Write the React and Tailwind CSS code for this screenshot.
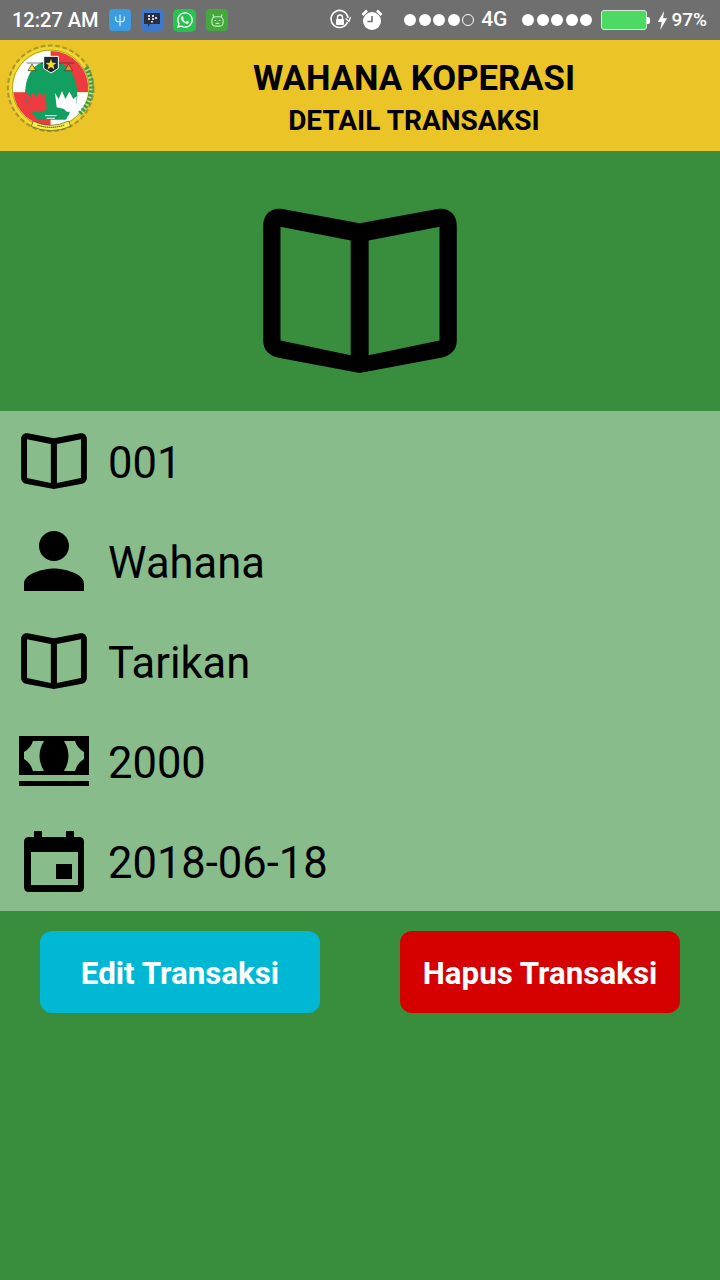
import React from "react";
import { FaWhatsapp } from "react-icons/fa";

const BookIcon = ({ className }) => (
  <svg viewBox="70 52 582 496" className={className}>
    <path
      fillRule="evenodd"
      d="M360 98L128 55C95 49 70 70 70 105V450C70 480 90 497 120 503L360 548L600 503C632 497 652 480 652 450V105C652 70 627 49 594 55Z M122 108L333 150V495L122 450Z M387 150L600 108V450L387 495Z"
    />
  </svg>
);

const PersonIcon = () => (
  <svg viewBox="4 4 16 16" className="w-[60px] h-[60px]">
    <path d="M12 12c2.21 0 4-1.79 4-4s-1.79-4-4-4-4 1.79-4 4 1.79 4 4 4zm0 2c-2.67 0-8 1.34-8 4v2h16v-2c0-2.66-5.33-4-8-4z" />
  </svg>
);

const MoneyIcon = () => (
  <svg viewBox="0 0 70 50" className="w-[70px] h-[50px]">
    <path
      fillRule="evenodd"
      d="M0 0H70V39H0Z M25 5H14Q12 12 5 16V23Q12 27 14 35H25Q16 20 25 5Z M45 5H56Q58 12 65 16V23Q58 27 56 35H45Q54 20 45 5Z"
    />
    <rect x="0" y="45" width="70" height="5" />
  </svg>
);

const CalendarIcon = () => (
  <svg viewBox="0 0 60 61" className="w-[60px] h-[61px]">
    <path
      fillRule="evenodd"
      d="M10 0H18V6H42V0H50V6H55Q60 6 60 11V56Q60 61 55 61H5Q0 61 0 56V11Q0 6 5 6H10Z M7 21V54H54V21Z"
    />
    <rect x="32" y="33" width="16" height="15" />
  </svg>
);

// coordinates follow the 3x crop of the emblem
const Logo = () => (
  <svg viewBox="18 132 270 276" className="w-[90px] h-[92px]">
    <circle cx="152" cy="268" r="128" fill="none" stroke="#a89a2a" strokeWidth="7" strokeDasharray="14 8" />
    <circle cx="152" cy="268" r="125" fill="#f0d830" />
    <circle cx="152" cy="268" r="115" fill="#f8ec40" stroke="#8a8428" strokeWidth="2" />
    <path d="M152 156A112 112 0 0 0 40 280H152Z" fill="#ffffff" />
    <path d="M152 156A112 112 0 0 1 264 280H152Z" fill="#ee3b3f" />
    <path d="M40 280A112 112 0 0 0 152 380V280Z" fill="#ee3b3f" />
    <path d="M264 280A112 112 0 0 1 152 380V280Z" fill="#ffffff" />
    <path d="M258 205A110 110 0 0 1 238 345" fill="none" stroke="#2d9c6c" strokeWidth="14" strokeDasharray="7 5" />
    <path d="M75 290C75 218 110 186 150 186C198 186 232 225 232 290L228 320L210 345L190 358H115L95 330L75 300Z" fill="#12a060" />
    <path d="M74 288L82 278L90 296L100 278L108 296L118 278L126 294L136 280L140 330L118 345L95 335Z" fill="#ee3b3f" />
    <path d="M165 282L176 300L186 276L196 300L208 278L220 300L230 292L228 325L210 348L192 330L170 325Z" fill="#ffffff" />
    <path d="M95 338H210L198 362H112Z" fill="#12a060" />
    <path d="M135 350H170M140 358H165" stroke="#e8f4ea" strokeWidth="3" />
    <path d="M80 192H222" stroke="#333333" strokeWidth="2" />
    <path d="M96 195L108 215H84Z" fill="#f7dc2a" stroke="#333333" strokeWidth="2" />
    <path d="M206 195L218 215H194Z" fill="#ec8c2c" stroke="#333333" strokeWidth="2" />
    <path d="M131 172H175V208L153 222L131 208Z" fill="#1f2a30" stroke="#ffffff" strokeWidth="3" />
    <path d="M153 180L157 191L169 192L160 199L163 211L153 204L143 211L146 199L137 192L149 191Z" fill="#f7dc2a" />
    <path d="M100 366Q152 392 206 366L212 382Q152 408 94 382Z" fill="#f9ef4c" stroke="#4b4a20" strokeWidth="2" />
    <path d="M112 378Q152 392 194 378" fill="none" stroke="#2c2c20" strokeWidth="3" strokeDasharray="4 2" />
  </svg>
);

const StatusApps = () => (
  <div className="flex items-center gap-[10px] ml-[11px]">
    <div className="w-[22px] h-[22px] rounded-[4px] bg-[#3a9be0] flex items-center justify-center">
      <svg viewBox="0 0 16 16" className="w-[14px] h-[14px]" fill="none" stroke="#d8eefa" strokeWidth="1.4">
        <path d="M8 2V15M3 4V7Q3 10 8 10Q13 10 13 7V4" />
      </svg>
    </div>
    <div className="w-[22px] h-[22px] rounded-[4px] bg-[#3b78d0] flex items-center justify-center">
      <svg viewBox="0 0 18 16" className="w-[18px] h-[16px]">
        <path d="M1 1H17V12H7L5 15V12H1Z" fill="#2b2f3a" />
        <path d="M5 3H7V5H5ZM9 3H11V5H9ZM5 6H7V8H5ZM9 6H11V8H9ZM12 5H14V7H12ZM8 9H10V10.5H8Z" fill="#d5d8e0" />
      </svg>
    </div>
    <div className="w-[23px] h-[23px] rounded-[5px] bg-[#28c24f] flex items-center justify-center">
      <FaWhatsapp className="w-[18px] h-[18px] text-white" />
    </div>
    <div className="w-[22px] h-[22px] rounded-[4px] bg-[#44a83f] flex items-center justify-center">
      <svg viewBox="0 0 16 16" className="w-[15px] h-[15px]" fill="none" stroke="#cdeec0" strokeWidth="1.2">
        <rect x="2" y="4" width="12" height="10" rx="4" />
        <path d="M4 4 L3 1.5M12 4 L13 1.5M5 8H6.5M9.5 8H11M6 11H10" />
      </svg>
    </div>
  </div>
);

const Dots = ({ empty }) => (
  <div className="flex items-center gap-[2.5px]">
    {[0, 1, 2, 3, 4].map((i) =>
      i === 4 && empty ? (
        <span key={i} className="w-[12px] h-[12px] rounded-full border border-white" />
      ) : (
        <span key={i} className="w-[12px] h-[12px] rounded-full bg-white" />
      )
    )}
  </div>
);

const StatusBar = () => (
  <div className="h-10 bg-[#6f6f6f] flex items-center pl-[12px] pr-[13px] text-white text-[20px] font-medium">
    <span>12:27 AM</span>
    <StatusApps />
    <div className="flex-1" />
    <svg viewBox="0 0 22 22" className="w-[22px] h-[22px] mr-[10px]" fill="none" stroke="white" strokeWidth="1.6">
      <path d="M18.5 13A8.5 8.5 0 1 1 19 9" />
      <path d="M16.5 9.5L20 12.5L21.5 8" strokeWidth="1.2" />
      <rect x="7" y="10" width="8" height="6" rx="1" fill="white" stroke="none" />
      <path d="M8.5 10V8.5A2.5 2.5 0 0 1 13.5 8.5V10" strokeWidth="1.4" />
    </svg>
    <svg viewBox="0 0 22 22" className="w-[22px] h-[22px] mr-[21px]">
      <circle cx="11" cy="12" r="9" fill="white" />
      <path d="M11 7V12.5H6.5" stroke="#6f6f6f" strokeWidth="1.6" fill="none" />
      <path d="M1.5 6L6 1.5M20.5 6L16 1.5" stroke="white" strokeWidth="2.6" />
    </svg>
    <Dots empty />
    <span className="ml-[7px] mr-[15px] text-[21px]">4G</span>
    <Dots />
    <div className="ml-[9px] w-[46px] h-[20px] rounded-[3px] border border-[#d9ead9] bg-[#4cd964]" />
    <div className="w-[3px] h-[7px] bg-white rounded-r-[2px] mr-[7px]" />
    <svg viewBox="0 0 10 18" className="w-[11px] h-[19px] mr-[3px]" fill="white">
      <path d="M6.5 0L0.5 10.5H4.2L2.8 18L9.5 6.8H5.6Z" />
    </svg>
    <span className="text-[19px]">97%</span>
  </div>
);

const Row = ({ icon, value }) => (
  <div className="h-[100px] flex items-center">
    <div className="w-[108px] flex justify-center shrink-0">{icon}</div>
    <span className="block pt-[6px] text-[43.5px] leading-none text-black">{value}</span>
  </div>
);

export default function App() {
  return (
    <div className="w-[720px] h-[1280px] flex flex-col bg-[#388e3c] font-['Roboto',sans-serif] overflow-hidden">
      <StatusBar />

      <header className="h-[111px] bg-[#ebc427] flex items-center">
        <div className="w-[108px] pl-[6px] mb-[14px] shrink-0">
          <Logo />
        </div>
        <div className="flex-1 pt-[3px] text-center text-black font-bold">
          <h1 className="text-[34.7px] leading-[44px]">WAHANA KOPERASI</h1>
          <h2 className="mt-[3px] text-[28px] leading-[36px]">DETAIL TRANSAKSI</h2>
        </div>
      </header>

      <div className="h-[260px] pt-[18px] flex items-center justify-center">
        <BookIcon className="w-[194px] h-[165px]" />
      </div>

      <div className="bg-[#88bc8a]">
        <Row icon={<BookIcon className="w-[66px] h-[56px]" />} value="001" />
        <Row icon={<PersonIcon />} value="Wahana" />
        <Row icon={<BookIcon className="w-[66px] h-[56px]" />} value="Tarikan" />
        <Row icon={<MoneyIcon />} value="2000" />
        <Row icon={<CalendarIcon />} value="2018-06-18" />
      </div>

      <div className="flex justify-between px-10 pt-5">
        <button className="w-[280px] h-[82px] pt-[4px] rounded-xl bg-[#00b8d4] text-white text-[31.3px] font-bold">
          Edit Transaksi
        </button>
        <button className="w-[280px] h-[82px] pt-[4px] rounded-xl bg-[#d50000] text-white text-[31.3px] font-bold">
          Hapus Transaksi
        </button>
      </div>
    </div>
  );
}
